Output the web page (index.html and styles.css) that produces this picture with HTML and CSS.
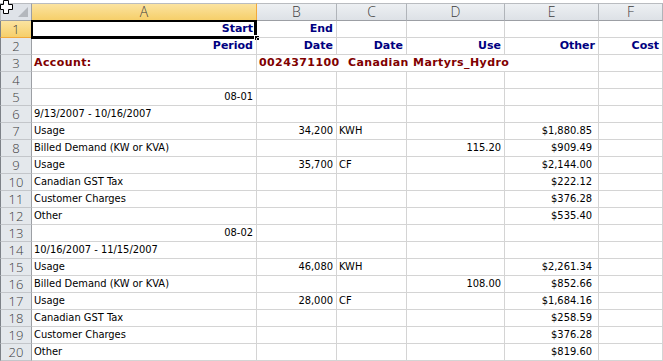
FILE: index.html
```html
<!DOCTYPE html>
<html lang="en">
<head>
    <meta charset="UTF-8">
    <title>Utility Bill Sheet</title>
    <link rel="stylesheet" href="styles.css">
</head>
<body>
<div class="sheet">
    <!-- column headers -->
    <div class="corner"><span class="tri"></span></div>
    <div class="colhead on">A</div>
    <div class="colhead">B</div>
    <div class="colhead">C</div>
    <div class="colhead">D</div>
    <div class="colhead">E</div>
    <div class="colhead last">F</div>

    <div class="rowhead on">1</div>
    <div class="cell hd r active">Start<span class="handle"></span></div>
    <div class="cell hd r">End</div>
    <div class="cell"></div>
    <div class="cell"></div>
    <div class="cell"></div>
    <div class="cell"></div>

    <div class="rowhead">2</div>
    <div class="cell hd r">Period</div>
    <div class="cell hd r">Date</div>
    <div class="cell hd r">Date</div>
    <div class="cell hd r">Use</div>
    <div class="cell hd r">Other</div>
    <div class="cell hd r">Cost</div>

    <div class="rowhead">3</div>
    <div class="cell acct">Account:</div>
    <div class="cell acct wide">0024371100  Canadian Martyrs_Hydro</div>
    <div class="cell"></div>

    <div class="rowhead">4</div>
    <div class="cell"></div><div class="cell"></div><div class="cell"></div><div class="cell"></div><div class="cell"></div><div class="cell"></div>

    <div class="rowhead">5</div>
    <div class="cell r">08-01</div><div class="cell"></div><div class="cell"></div><div class="cell"></div><div class="cell"></div><div class="cell"></div>

    <div class="rowhead">6</div>
    <div class="cell">9/13/2007 - 10/16/2007</div><div class="cell"></div><div class="cell"></div><div class="cell"></div><div class="cell"></div><div class="cell"></div>

    <div class="rowhead">7</div>
    <div class="cell">Usage</div><div class="cell r">34,200</div><div class="cell">KWH</div><div class="cell"></div><div class="cell money">$1,880.85</div><div class="cell"></div>

    <div class="rowhead">8</div>
    <div class="cell">Billed Demand (KW or KVA)</div><div class="cell"></div><div class="cell"></div><div class="cell r">115.20</div><div class="cell money">$909.49</div><div class="cell"></div>

    <div class="rowhead">9</div>
    <div class="cell">Usage</div><div class="cell r">35,700</div><div class="cell">CF</div><div class="cell"></div><div class="cell money">$2,144.00</div><div class="cell"></div>

    <div class="rowhead">10</div>
    <div class="cell">Canadian GST Tax</div><div class="cell"></div><div class="cell"></div><div class="cell"></div><div class="cell money">$222.12</div><div class="cell"></div>

    <div class="rowhead">11</div>
    <div class="cell">Customer Charges</div><div class="cell"></div><div class="cell"></div><div class="cell"></div><div class="cell money">$376.28</div><div class="cell"></div>

    <div class="rowhead">12</div>
    <div class="cell">Other</div><div class="cell"></div><div class="cell"></div><div class="cell"></div><div class="cell money">$535.40</div><div class="cell"></div>

    <div class="rowhead">13</div>
    <div class="cell r">08-02</div><div class="cell"></div><div class="cell"></div><div class="cell"></div><div class="cell"></div><div class="cell"></div>

    <div class="rowhead">14</div>
    <div class="cell">10/16/2007 - 11/15/2007</div><div class="cell"></div><div class="cell"></div><div class="cell"></div><div class="cell"></div><div class="cell"></div>

    <div class="rowhead">15</div>
    <div class="cell">Usage</div><div class="cell r">46,080</div><div class="cell">KWH</div><div class="cell"></div><div class="cell money">$2,261.34</div><div class="cell"></div>

    <div class="rowhead">16</div>
    <div class="cell">Billed Demand (KW or KVA)</div><div class="cell"></div><div class="cell"></div><div class="cell r">108.00</div><div class="cell money">$852.66</div><div class="cell"></div>

    <div class="rowhead">17</div>
    <div class="cell">Usage</div><div class="cell r">28,000</div><div class="cell">CF</div><div class="cell"></div><div class="cell money">$1,684.16</div><div class="cell"></div>

    <div class="rowhead">18</div>
    <div class="cell">Canadian GST Tax</div><div class="cell"></div><div class="cell"></div><div class="cell"></div><div class="cell money">$258.59</div><div class="cell"></div>

    <div class="rowhead">19</div>
    <div class="cell">Customer Charges</div><div class="cell"></div><div class="cell"></div><div class="cell"></div><div class="cell money">$376.28</div><div class="cell"></div>

    <div class="rowhead">20</div>
    <div class="cell">Other</div><div class="cell"></div><div class="cell"></div><div class="cell"></div><div class="cell money">$819.60</div><div class="cell"></div>
</div>
<svg class="cursor" width="13" height="14" viewBox="0 0 13 14">
    <path d="M3.5 0.5h5v4h4v5h-4v4h-5v-4h-3v-5h3z" fill="#fff" stroke="#000" stroke-width="1"/>
</svg>
</body>
</html>
```

FILE: styles.css
```css
*{
    margin: 0;
    padding: 0;
    box-sizing: border-box;
}
html,body{
    width: 100%;
    height: 100%;
    background: #fff;
    overflow: hidden;
}
body{
    padding-top: 3px;
    font-family: "DejaVu Sans Condensed", "DejaVu Sans", sans-serif;
    font-size: 11px;
    color: #000;
}
.sheet{
    display: grid;
    grid-template-columns: 32px 225px 80px 70px 98px 94px 64px;
    grid-template-rows: 18px;
    grid-auto-rows: 17px;
    width: 663px;
}
.corner{
    position: relative;
    background: #dfe3e8;
    border-right: 1px solid #9c9fa4;
    border-bottom: 1px solid #9c9fa4;
    border-top: 1px solid #b9bcc0;
    border-left: 1px solid #b9bcc0;
}
.corner .tri{
    position: absolute;
    right: 3px;
    bottom: 3px;
    width: 0;
    height: 0;
    border-left: 10px solid transparent;
    border-bottom: 10px solid #b4b8bd;
}
.colhead,
.rowhead{
    font-family: "Open Sans", "DejaVu Sans", sans-serif;
    font-weight: 300;
    color: #3c3c3c;
    text-align: center;
    overflow: hidden;
    background: linear-gradient(#edf0f3, #dde1e6);
}
.colhead{
    font-size: 14px;
    line-height: 16px;
    border-top: 1px solid #b9bcc0;
    border-right: 1px solid #b0b4b9;
    border-bottom: 1px solid #9c9fa4;
}
.rowhead{
    font-size: 13px;
    line-height: 16px;
    border-left: 1px solid #7d8288;
    border-right: 1px solid #9c9fa4;
    border-bottom: 1px solid #c3c6ca;
    background: #e4e8ec;
}
.colhead.on,
.rowhead.on{
    background: linear-gradient(#fbe3a0, #f6cf6a);
    border-right-color: #f2a93b;
    border-bottom-color: #f2a93b;
}
.cell{
    position: relative;
    border-right: 1px solid #d4d4d4;
    border-bottom: 1px solid #d4d4d4;
    padding: 0 3px 0 2px;
    line-height: 16px;
    white-space: nowrap;
    overflow: hidden;
}
.r{
    text-align: right;
}
.money{
    text-align: right;
    padding-right: 6px;
}
.hd{
    font-family: "DejaVu Sans", sans-serif;
    font-weight: bold;
    color: #000080;
}
.acct{
    font-family: "DejaVu Sans", sans-serif;
    font-weight: bold;
    color: #800000;
    letter-spacing: 0.4px;
}
.wide{
    grid-column: span 4;
    white-space: pre;
}
.active{
    overflow: visible;
    box-shadow: inset 0 0 0 2px #000;
    border-color: #000;
    margin: -1px 0 -1px -1px;
    padding-right: 3px;
    line-height: 18px;
}
.handle{
    position: absolute;
    right: -4px;
    bottom: -3px;
    width: 6px;
    height: 6px;
    background: #000;
    border: 1px solid #fff;
}
.cursor{
    position: absolute;
    left: 0;
    top: 0;
}
```
